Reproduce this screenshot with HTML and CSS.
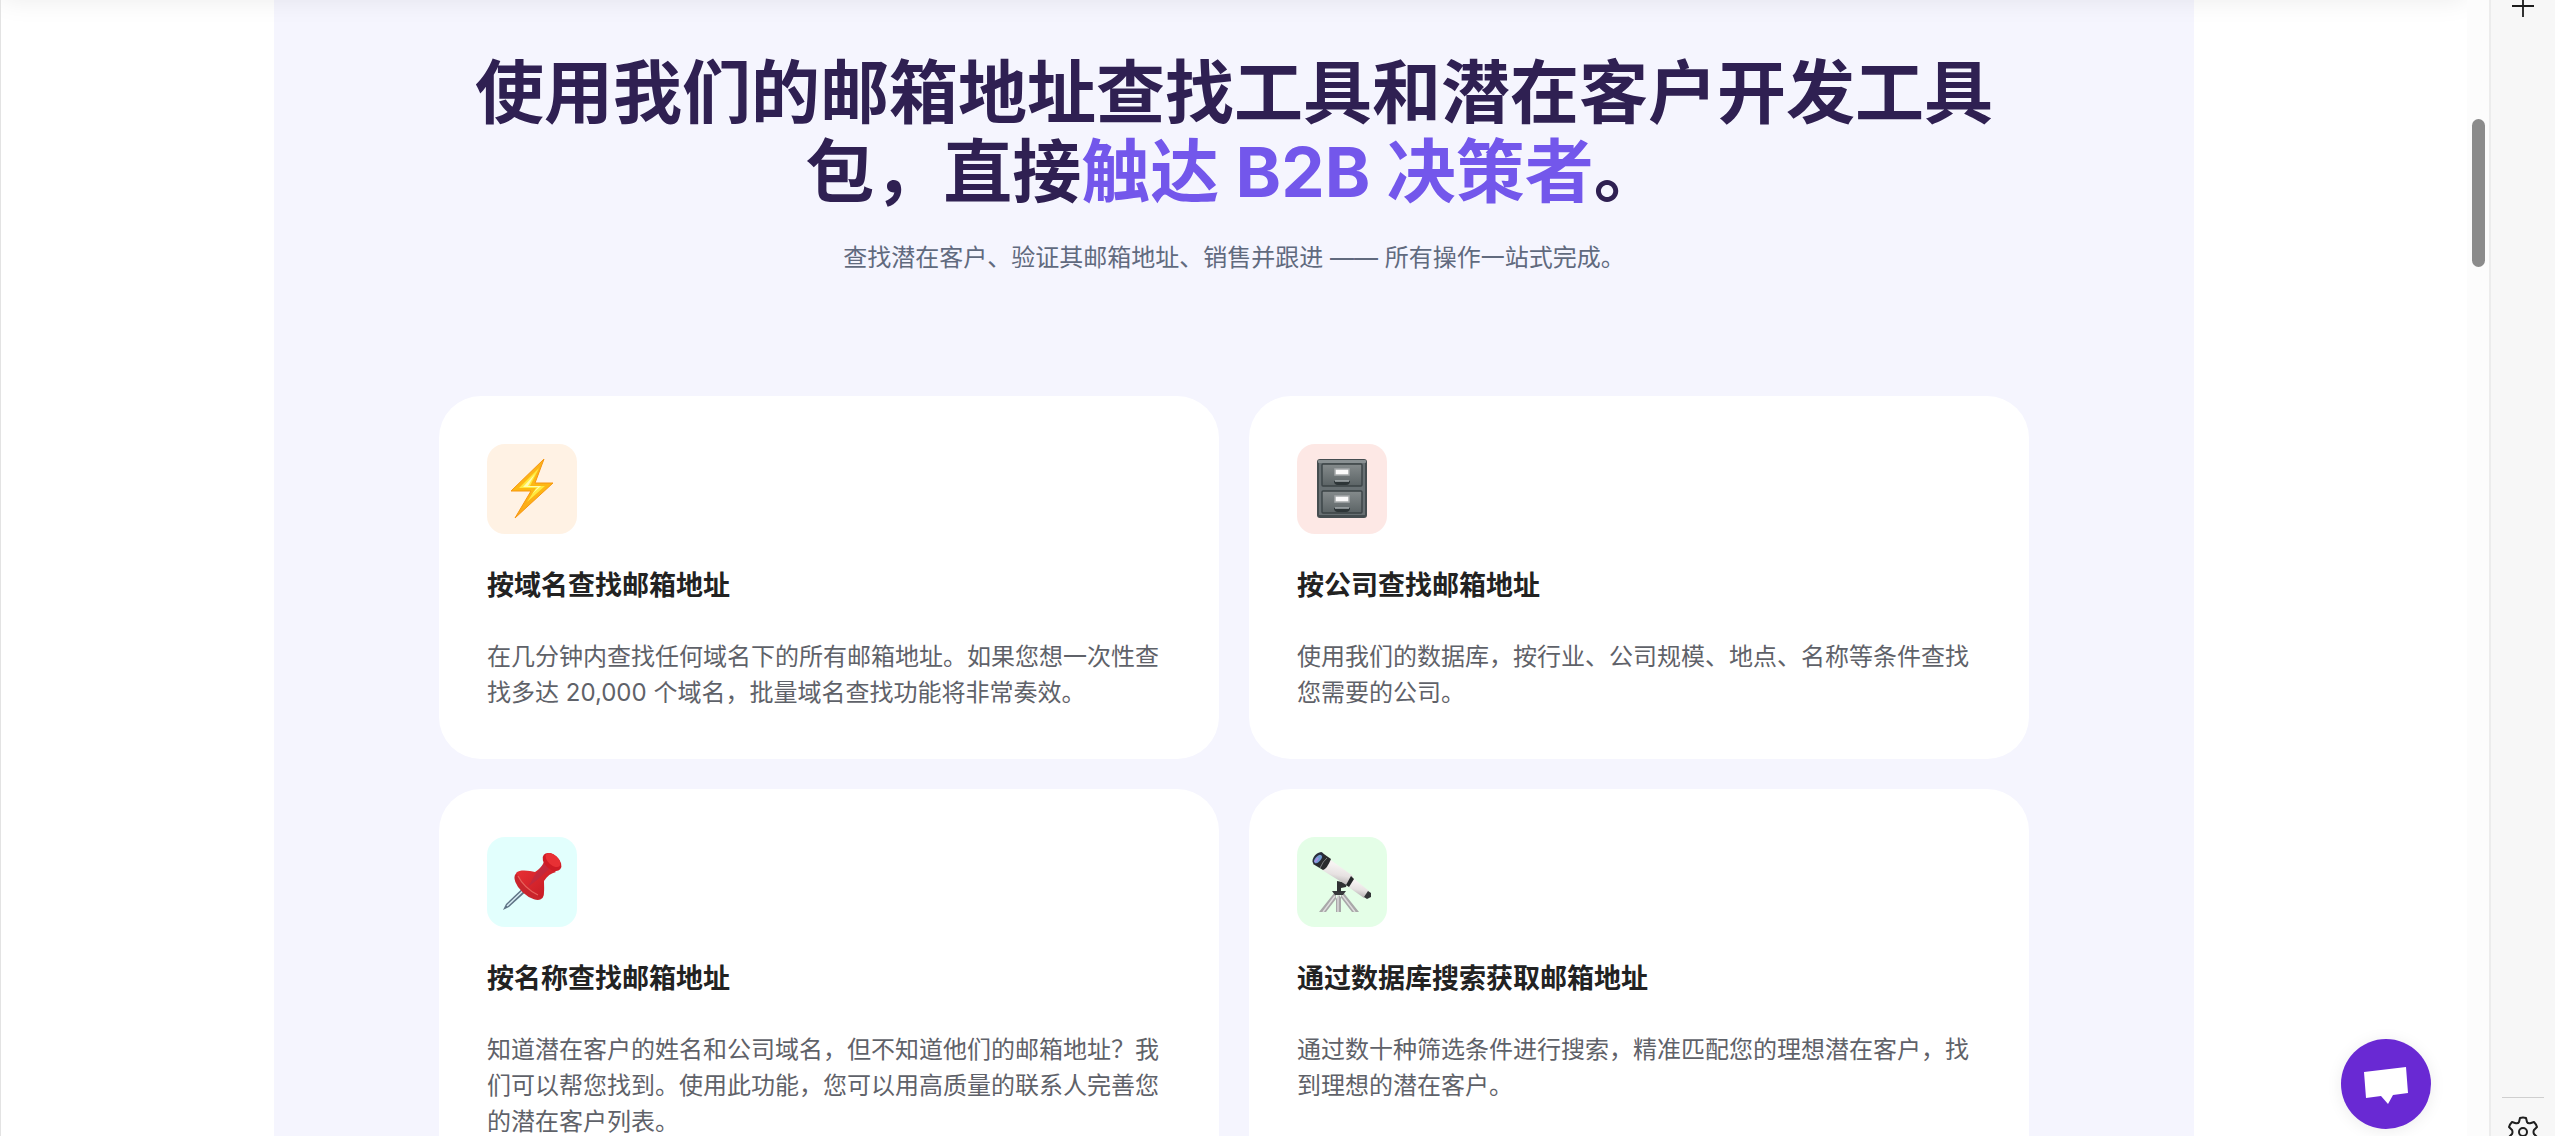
FILE: index.html
```html
<!DOCTYPE html>
<html lang="zh-CN">
	<head>
		<meta charset="utf-8">
		<title>邮箱地址查找工具</title>
		<link rel="stylesheet" href="styles.css">
	</head>
	<body>
		<div class="page">
			<div class="navbar"></div>
			<main class="features">
				<h2>使用我们的邮箱地址查找工具和潜在客户开发工具包，直接<span class="accent">触达 B2B 决策者</span>。</h2>
				<p class="lead">查找潜在客户、验证其邮箱地址、销售并跟进 —— 所有操作一站式完成。</p>

				<div class="cards">
					<article class="card">
						<div class="icon icon-orange">
							<svg viewBox="0 0 90 90" aria-hidden="true">
								<defs>
									<linearGradient id="bolt" x1="0" y1="0" x2="0" y2="1">
										<stop offset="0" stop-color="#fbb21c" />
										<stop offset=".5" stop-color="#fdb813" />
										<stop offset="1" stop-color="#fba51c" />
									</linearGradient>
								</defs>
								<path d="M57 15L24 47H44L28 74L66 39H48Z" fill="url(#bolt)" stroke="#f7960f" stroke-linejoin="round" />
								<path d="M52 24L32 44H49L40 58L58 42H43Z" fill="#ffe93f" />
								<path d="M48 30L36 43H51L45 50L54 42H41Z" fill="#fffcae" />
							</svg>
						</div>
						<h3>按域名查找邮箱地址</h3>
						<p>在几分钟内查找任何域名下的所有邮箱地址。如果您想一次性查找多达 20,000 个域名，批量域名查找功能将非常奏效。</p>
					</article>

					<article class="card">
						<div class="icon icon-red">
							<svg viewBox="0 0 90 90" aria-hidden="true">
								<defs>
									<linearGradient id="drawer" x1="0" y1="0" x2="0" y2="1">
										<stop offset="0" stop-color="#858b8c" />
										<stop offset="1" stop-color="#5b6365" />
									</linearGradient>
								</defs>
								<rect x="20" y="15" width="50" height="59" rx="3" fill="#454d50" />
								<rect x="21" y="16" width="48" height="3" rx="1" fill="#899092" />
								<rect x="22" y="19" width="46" height="52" fill="#687073" />
								<g fill="url(#drawer)" stroke="#3b4346" stroke-width="1.4">
									<rect x="25" y="20" width="40" height="22" rx="1" />
									<rect x="25" y="47" width="40" height="22" rx="1" />
								</g>
								<g fill="#fafafa" stroke="#a4a8a9" stroke-width="1.5">
									<rect x="38" y="25" width="14" height="6" />
									<rect x="38" y="52" width="14" height="6" />
								</g>
								<path d="M37 37H53Q53 41 49 41H41Q37 41 37 37ZM37 64H53Q53 68 49 68H41Q37 68 37 64Z" fill="#2d3537" />
								<path d="M38 37H52M38 64H52" stroke="#a4abad" stroke-width="1.3" />
							</svg>
						</div>
						<h3>按公司查找邮箱地址</h3>
						<p>使用我们的数据库，按行业、公司规模、地点、名称等条件查找您需要的公司。</p>
					</article>

					<article class="card">
						<div class="icon icon-cyan">
							<svg viewBox="0 0 90 90" aria-hidden="true">
								<defs>
									<linearGradient id="pin" x1="0" y1="0" x2="1" y2="1">
										<stop offset="0" stop-color="#ee3437" />
										<stop offset="1" stop-color="#c01822" />
									</linearGradient>
								</defs>
								<path d="M40 47L19 67L16 73L22 70L43 51Z" fill="#5f7486" />
								<path d="M40 50L20 69" stroke="#d7edf3" stroke-width="1.5" />
								<ellipse cx="42" cy="49" rx="18" ry="9" transform="rotate(43 42 49)" fill="#c9252c" />
								<path d="M29 36C33 32 43 34 48 35C54 31 57 27 57 23L69 35C64 36 60 39 57 44C57 50 58 58 55 61C49 60 37 50 29 36Z" fill="url(#pin)" />
								<path d="M57 26L48 38L41 50L50 43L62 32Z" fill="#b02b48" opacity=".55" />
								<ellipse cx="65" cy="25" rx="11" ry="7" transform="rotate(42 65 25)" fill="#cf1b25" />
								<ellipse cx="66" cy="23" rx="9" ry="5" transform="rotate(42 66 23)" fill="#e83034" />
								<path d="M31 39Q37 51 51 58" fill="none" stroke="#e6625c" stroke-width="1.2" />
							</svg>
						</div>
						<h3>按名称查找邮箱地址</h3>
						<p>知道潜在客户的姓名和公司域名，但不知道他们的邮箱地址？我们可以帮您找到。使用此功能，您可以用高质量的联系人完善您的潜在客户列表。</p>
					</article>

					<article class="card">
						<div class="icon icon-green">
							<svg viewBox="0 0 90 90" aria-hidden="true">
								<defs>
									<linearGradient id="tube" x1=".6" y1="0" x2=".4" y2="1">
										<stop offset=".25" stop-color="#f6f3f2" />
										<stop offset=".6" stop-color="#e6e1e1" />
										<stop offset="1" stop-color="#aaa6a7" />
									</linearGradient>
								</defs>
								<path d="M38 55L22 75H29L42 58ZM39 57H44V75H39ZM42 58L55 75H62L46 55Z" fill="#a9a8a9" />
								<path d="M38 59L26 75M41 58V75M45 58L58 75" stroke="#dedcdd" stroke-width="1.4" />
								<path d="M35 54H49L46 58H38Z" fill="#36383a" />
								<path d="M40 44L50 46L49 50L44 51V55H40Z" fill="#2f3133" />
								<path d="M31 21L56 39L51 49L25 33Z" fill="url(#tube)" />
								<path d="M55 40L72 54L67 61L50 49Z" fill="url(#tube)" />
								<path d="M54 39L57 42L52 50L49 48Z" fill="#252729" />
								<path d="M71 54L74 56V60L70 62L67 60Z" fill="#343638" />
								<path d="M24 15L34 22Q30 32 26 33L16 27Z" fill="#292b2d" />
								<path d="M30 21Q26 24 23 31" fill="none" stroke="#7b7d80" />
								<ellipse cx="21" cy="21" rx="7" ry="4" transform="rotate(-48 21 21)" fill="#292d3d" />
								<ellipse cx="21" cy="22" rx="5" ry="2.6" transform="rotate(-48 21 22)" fill="#719bd0" />
								<path d="M18 25L21 21" stroke="#a88ce2" stroke-width="2" />
							</svg>
						</div>
						<h3>通过数据库搜索获取邮箱地址</h3>
						<p>通过数十种筛选条件进行搜索，精准匹配您的理想潜在客户，找到理想的潜在客户。</p>
					</article>
				</div>
			</main>

			<button class="chat" type="button" aria-label="聊天">
				<svg viewBox="0 0 90 90" aria-hidden="true">
					<path d="M23 33L65 28L67 54L52 56L47 65L40 57L25 59Z" fill="#fff" />
				</svg>
			</button>
		</div>

		<div class="scrollbar">
			<div class="thumb"></div>
		</div>

		<aside class="sidebar">
			<button class="add" type="button" aria-label="添加">
				<svg viewBox="0 0 24 18" aria-hidden="true">
					<path d="M1 6H23M12 0V17" stroke="#1c1c1c" stroke-width="1.8" />
				</svg>
			</button>
			<button class="settings" type="button" aria-label="设置">
				<svg viewBox="0 0 32 32" fill="none" stroke="#1f1f1f" stroke-width="2" stroke-linejoin="round" aria-hidden="true">
					<path d="M13 2Q16 1 19 2L20 6Q21 8 24 7L27 6Q29 8 30 11L27 14Q26 16 27 18L30 21Q29 24 27 26L24 25Q21 24 20 26L19 30Q16 31 13 30L12 26Q11 24 8 25L5 26Q3 24 2 21L5 18Q6 16 5 14L2 11Q3 8 5 6L8 7Q11 8 12 6Z" />
					<circle cx="16" cy="16" r="4" />
				</svg>
			</button>
		</aside>
	</body>
</html>
```

FILE: styles.css
```css
* {
	box-sizing: border-box;
}

body {
	display: flex;
	height: 100vh;
	margin: 0;
	overflow: hidden;
	background: #fff;
	font-family: Inter, "Noto Sans CJK SC", sans-serif;
}

button {
	border: none;
	padding: 0;
	background: none;
	cursor: pointer;
}
svg {
	display: block;
	width: 100%;
}

.page {
	position: relative;
	flex: 1;
	min-width: 0;
	border-left: 1px solid #e3e3e3;
	overflow: hidden;
}

/* only the shadow of the bar reaches into view */
.navbar {
	position: absolute;
	top: -80px;
	left: 0;
	right: 0;
	height: 80px;
	box-shadow: 0 0 25px rgba(0, 0, 0, 0.08);
}

.features {
	max-width: 1920px;
	min-height: 100%;
	margin: 0 auto;
	padding: 54px 24px 60px;
	background: #f5f5fe;
	text-align: center;
}
.features h2 {
	max-width: 1560px;
	margin: 0 auto 28px;
	color: #2f2052;
	font-size: 69px;
	font-weight: 700;
	line-height: 79px;
}
.accent {
	color: #7357eb;
}
.lead {
	margin: 0 0 120px;
	color: #616a7e;
	font-size: 24px;
	line-height: 36px;
}

.cards {
	display: grid;
	grid-template-columns: 1fr 1fr;
	gap: 30px;
	max-width: 1590px;
	margin: 0 auto;
	text-align: left;
}
.card {
	padding: 48px;
	border-radius: 42px;
	background: #fff;
}
.card h3 {
	margin: 32px 0 33px;
	color: #222;
	font-size: 27px;
	font-weight: 700;
	line-height: 40px;
}
.card p {
	margin: 0;
	color: #5f6269;
	font-size: 24px;
	line-height: 36px;
}

.icon {
	width: 90px;
	height: 90px;
	border-radius: 18px;
}
.icon-orange {
	background: #fff2e4;
}
.icon-red {
	background: #fde8e5;
}
.icon-cyan {
	background: #e2fffd;
}
.icon-green {
	background: #e4fee7;
}

.chat {
	position: absolute;
	right: 36px;
	bottom: 7px;
	width: 90px;
	height: 90px;
	border-radius: 50%;
	background: #6929d3;
	box-shadow: 0 2px 16px rgba(0, 0, 0, 0.08);
}

.scrollbar {
	width: 22px;
	padding-top: 119px;
	background: #fcfcfc;
}
.thumb {
	width: 13px;
	height: 148px;
	margin: 0 auto;
	border-radius: 7px;
	background: #8b8b8b;
}

.sidebar {
	display: flex;
	flex-direction: column;
	justify-content: space-between;
	align-items: center;
	width: 66px;
	border-left: 2px solid #ececec;
	background: #f7f7f7;
}
.add {
	width: 24px;
}
.settings {
	width: 42px;
	height: 39px;
	padding: 18px 5px 0;
	border-top: 1px solid #cfcfcf;
	overflow: hidden;
}
```
